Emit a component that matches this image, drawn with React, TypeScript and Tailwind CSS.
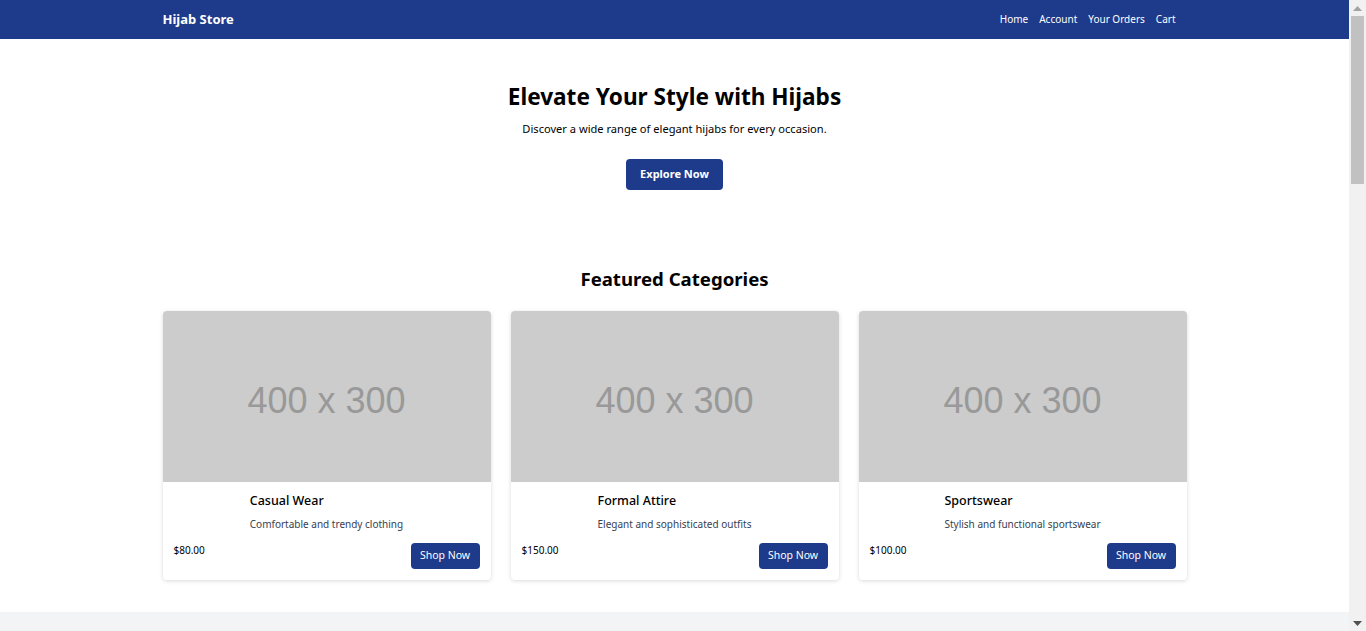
import React from "react";

const cats = [
  { title: "Casual Wear", desc: "Comfortable and trendy clothing", price: "$80.00" },
  { title: "Formal Attire", desc: "Elegant and sophisticated outfits", price: "$150.00" },
  { title: "Sportswear", desc: "Stylish and functional sportswear", price: "$100.00" },
];

export default function App() {
  return (
    <div className="h-screen flex overflow-hidden bg-white text-black" style={{ fontFamily: '"Noto Sans", "Open Sans", sans-serif' }}>
      <main className="flex-1 min-w-0">
        <nav className="bg-[#1e3a8a] h-[39px]">
          <div className="max-w-5xl mx-auto h-full flex items-center justify-between">
            <span className="text-white font-bold text-[13px]">Hijab Store</span>
            <div className="flex items-center gap-[11px] pr-[11px] text-white text-[10px]">
              <a>Home</a>
              <a>Account</a>
              <a>Your Orders</a>
              <a>Cart</a>
            </div>
          </div>
        </nav>

        <section className="pt-[42px] flex flex-col items-center text-center">
          <h1 className="text-[22.6px] leading-[32px] font-bold">Elevate Your Style with Hijabs</h1>
          <p className="mt-[7px] text-[11.1px] leading-[18px]">Discover a wide range of elegant hijabs for every occasion.</p>
          <button className="mt-[21px] w-[97px] h-[31px] rounded bg-[#1e3a8a] text-white text-[11px] font-bold">Explore Now</button>
        </section>

        <section className="mt-[75px] pb-8">
          <div className="max-w-5xl mx-auto">
            <h2 className="text-center text-[18.6px] leading-[28px] font-bold">Featured Categories</h2>
            <div className="mt-[18px] grid grid-cols-3 gap-5">
              {cats.map((c) => (
                <div key={c.title} className="bg-white rounded shadow-[0_1px_4px_rgba(0,0,0,0.15)] overflow-hidden">
                  <div className="h-[171px] bg-[#cccccc] flex items-center justify-center">
                    <span className="text-[#999999] text-[36px] mt-[8px]" style={{ fontFamily: '"Liberation Sans", Arial, sans-serif' }}>400 x 300</span>
                  </div>
                  <div className="px-[11px] pt-[10px] pb-[11px]">
                    <div className="flex justify-center">
                      <div>
                        <h3 className="text-[12.5px] leading-[18px] font-medium">{c.title}</h3>
                        <p className="mt-[6px] text-[10px] leading-[16px] text-[#374151]">{c.desc}</p>
                      </div>
                    </div>
                    <div className="mt-[11px] flex justify-between items-start">
                      <span className="text-[10px] leading-[16px] mt-[-1px]">{c.price}</span>
                      <button className="w-[69px] h-[26px] rounded bg-[#1e3a8a] text-white text-[10.5px]">Shop Now</button>
                    </div>
                  </div>
                </div>
              ))}
            </div>
          </div>
        </section>

        <section className="bg-[#f3f4f6] h-[300px]"></section>
      </main>

      <div className="w-[17px] shrink-0 bg-[#f1f1f1] flex flex-col items-center">
        <div className="h-[16px] flex items-center justify-center">
          <svg width="9" height="5" viewBox="0 0 9 5"><path d="M0 5 L4.5 0 L9 5 Z" fill="#a3a3a3" /></svg>
        </div>
        <div className="w-[13px] h-[168px] bg-[#c1c1c1]" />
        <div className="flex-1" />
        <div className="h-[16px] flex items-center justify-center">
          <svg width="9" height="5" viewBox="0 0 9 5"><path d="M0 0 L9 0 L4.5 5 Z" fill="#505050" /></svg>
        </div>
      </div>
    </div>
  );
}
